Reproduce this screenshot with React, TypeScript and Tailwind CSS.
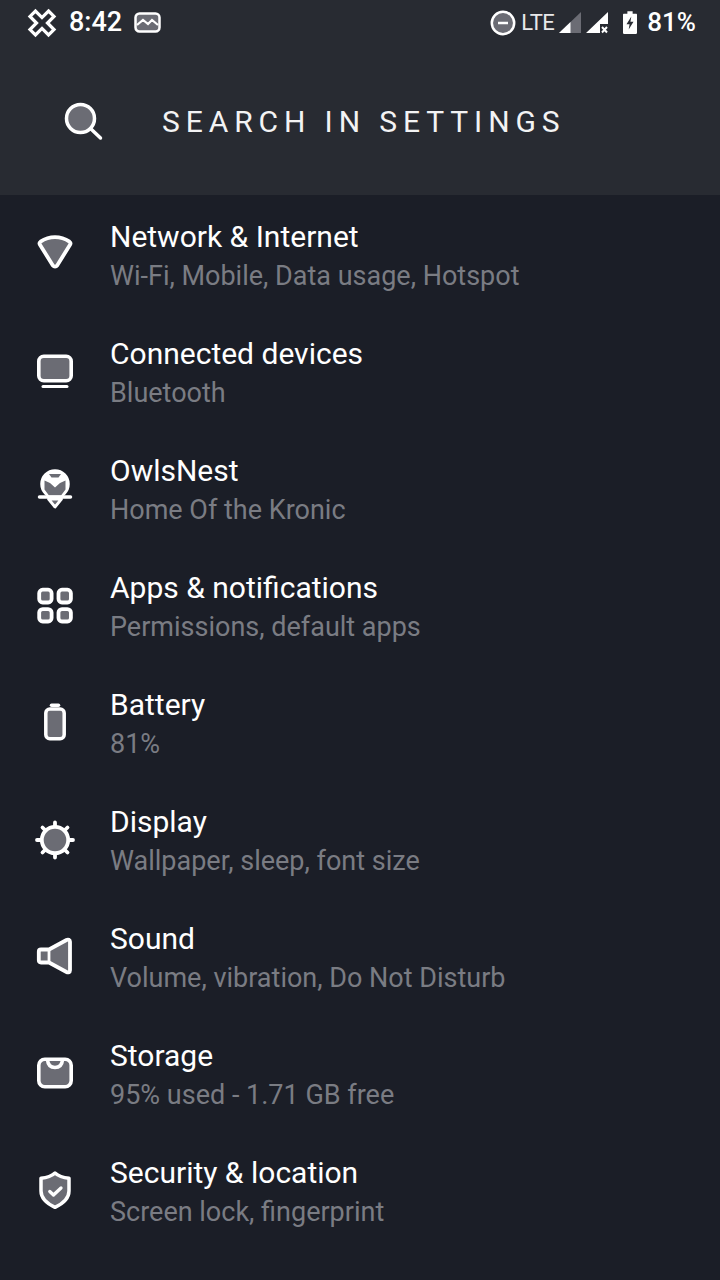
import React from 'react';

const fill = '#6b6c74';

const icons: Record<string, React.ReactNode> = {
  wifi: (
    <path d="M13.500 15.500c9-6 20-6 29 0 1 .7 1.200 1.800.7 2.800L30 39.500c-.9 1.300-3 1.300-4 0L12.800 18.300c-.5-1-.3-2.100.7-2.800z" transform="translate(0 -2.800)" fill={fill} stroke="#fff" strokeWidth="3.800" strokeLinejoin="round" />
  ),
  device: (
    <>
      <rect x="11.800" y="10.300" width="32.400" height="24.400" rx="5" fill={fill} stroke="#fff" strokeWidth="3.600" />
      <path d="M16 40.500h24" stroke="#fff" strokeWidth="3" strokeLinecap="round" />
    </>
  ),
  owl: (
    <>
      <circle cx="28" cy="21" r="13" fill="#fff" stroke="#fff" strokeWidth="3.500" />
      <path d="M22 11h12l-2.500 3.500h-7z" fill={fill} />
      <path d="M17.500 17.500l5.500 2.500 5 4.500 5-4.500 5.500-2.500v9l-4.500 6h-12l-4.500-6z" fill={fill} />
      <path d="M12.500 34h31" stroke="#fff" strokeWidth="3.500" strokeLinecap="round" />
      <path d="M21.500 36h13L28 44z" fill={fill} stroke="#fff" strokeWidth="2.800" strokeLinejoin="round" />
    </>
  ),
  apps: (
    <>
      <rect x="12.200" y="9.700" width="12.400" height="12.800" rx="3.500" fill={fill} stroke="#fff" strokeWidth="3.800" />
      <rect x="31.500" y="9.700" width="12.400" height="12.800" rx="3.500" fill={fill} stroke="#fff" strokeWidth="3.800" />
      <rect x="12.200" y="29.100" width="12.400" height="12.400" rx="3.500" fill={fill} stroke="#fff" strokeWidth="3.800" />
      <rect x="31.500" y="29.100" width="12.400" height="12.400" rx="3.500" fill={fill} stroke="#fff" strokeWidth="3.800" />
    </>
  ),
  battery: (
    <>
      <path d="M24.500 8.300h7" stroke="#fff" strokeWidth="3.500" strokeLinecap="round" />
      <rect x="18.800" y="12" width="18.400" height="29.800" rx="4" fill={fill} stroke="#fff" strokeWidth="3.500" />
    </>
  ),
  display: (
    <>
      <path d="M28 8.500v35M10 26h36M15.500 13.500l25 25M40.500 13.500l-25 25" stroke="#fff" strokeWidth="3.800" strokeLinecap="round" />
      <circle cx="28" cy="26" r="13.200" fill={fill} stroke="#fff" strokeWidth="3.800" />
    </>
  ),
  sound: (
    <>
      <path d="M14 18.500h8L39.500 9c1.700-.9 3.500-.2 3.500 1.800v28.400c0 2-1.800 2.700-3.500 1.800L22 31.500h-8c-1.500 0-2.200-.8-2.200-2.200v-8.600c0-1.400.7-2.200 2.200-2.200z" fill={fill} stroke="#fff" strokeWidth="3.800" strokeLinejoin="round" />
      <path d="M22 18.500v13" stroke="#fff" strokeWidth="2.800" />
    </>
  ),
  storage: (
    <>
      <rect x="11.800" y="11.300" width="32.400" height="27.400" rx="6" fill={fill} stroke="#fff" strokeWidth="3.600" />
      <path d="M20.500 12c.5 5 3.500 7.500 7.500 7.500s7-2.500 7.500-7.500" fill="none" stroke="#fff" strokeWidth="3.500" />
    </>
  ),
  security: (
    <>
      <path d="M28 8c3 2.800 8 4.700 14 5.200V26c0 7.500-6.500 12.800-14 16.300-7.500-3.500-14-8.800-14-16.300V13.200C20 12.700 25 10.800 28 8z" fill={fill} stroke="#fff" strokeWidth="3.500" strokeLinejoin="round" />
      <path d="M22.800 26.500l3.700 3.500 7.500-7" fill="none" stroke="#fff" strokeWidth="3.300" strokeLinecap="round" strokeLinejoin="round" />
    </>
  ),
};

const rows = [
  { icon: 'wifi', title: 'Network & Internet', sub: 'Wi-Fi, Mobile, Data usage, Hotspot' },
  { icon: 'device', title: 'Connected devices', sub: 'Bluetooth' },
  { icon: 'owl', title: 'OwlsNest', sub: 'Home Of the Kronic' },
  { icon: 'apps', title: 'Apps & notifications', sub: 'Permissions, default apps' },
  { icon: 'battery', title: 'Battery', sub: '81%' },
  { icon: 'display', title: 'Display', sub: 'Wallpaper, sleep, font size' },
  { icon: 'sound', title: 'Sound', sub: 'Volume, vibration, Do Not Disturb' },
  { icon: 'storage', title: 'Storage', sub: '95% used - 1.71 GB free' },
  { icon: 'security', title: 'Security & location', sub: 'Screen lock, fingerprint' },
  { icon: 'accounts', title: 'Accounts', sub: '' },
];

const StatusBar = () => (
  <div className="flex h-[45px] items-center justify-between pl-[27px] pr-[24px] text-white">
    <div className="flex items-center">
      <svg width="30" height="30" viewBox="0 0 30 30" className="mr-[12px]">
        <path d="M11 1.500h8v9.500h9.500v8H19v9.500h-8V19H1.500v-8H11z" transform="rotate(45 15 15) translate(.45 .45) scale(.97)" fill="none" stroke="#fff" strokeWidth="3.300" />
      </svg>
      <span className="text-[27px] font-medium">8:42</span>
      <svg width="28" height="22" viewBox="0 0 28 22" className="ml-[12px]">
        <rect x="1.500" y="1.500" width="24" height="18" rx="4" fill={fill} stroke="#fff" strokeWidth="2.500" />
        <path d="M3 13l6-5 5 4 4-4 6 5" fill="none" stroke="#fff" strokeWidth="2.200" />
      </svg>
    </div>
    <div className="flex items-center">
      <svg width="26" height="26" viewBox="0 0 26 26" className="mr-[5px]">
        <circle cx="13" cy="13" r="11.200" fill={fill} stroke="#fff" strokeWidth="2.500" />
        <path d="M8 13h10" stroke="#fff" strokeWidth="2.500" />
      </svg>
      <span className="text-[22px] text-[#e8e8ea] tracking-[-0.5px]">LTE</span>
      <svg width="24" height="24" viewBox="0 0 24 24" className="ml-[4px]">
        <path d="M1 22L23 1v21z" fill={fill} />
        <path d="M1 22L12.500 11V22z" fill="#fff" />
      </svg>
      <svg width="24" height="24" viewBox="0 0 24 24" className="ml-[3px]">
        <path d="M1 22L23 1v12h-8v9z" fill="#fff" />
        <path d="M17 16l5 5.500M22 16l-5 5.500" stroke="#fff" strokeWidth="2" />
      </svg>
      <svg width="14" height="25" viewBox="0 0 16 26" className="ml-[14px]">
        <path d="M5 0h6v3h4c.5 0 1 .5 1 1v21c0 .5-.5 1-1 1H1c-.5 0-1-.5-1-1V4c0-.5.5-1 1-1h4z" fill="#fff" />
        <path d="M9.500 6L4 15h3.500L6.500 21 12 12H8.500z" fill="#292c33" />
      </svg>
      <span className="ml-[10px] text-[26px] font-medium">81%</span>
    </div>
  </div>
);

export default function App() {
  return (
    <div className="h-[1280px] w-[720px] overflow-hidden bg-[#1b1e27] font-['Roboto',sans-serif]">
      <div className="h-[195px] bg-[#282b32]">
        <StatusBar />
        <div className="flex h-[153px] items-center pl-[64px]">
          <svg width="40" height="40" viewBox="0 0 40 40">
            <circle cx="16.500" cy="16.500" r="14" fill={fill} stroke="#fff" strokeWidth="3.500" />
            <path d="M26.500 26.500L36.500 36" stroke="#fff" strokeWidth="3.500" strokeLinecap="round" />
          </svg>
          <span className="ml-[58px] text-[30px] tracking-[5.9px] text-[#f3f3f4]">SEARCH IN SETTINGS</span>
        </div>
      </div>
      <div className="pt-[3px]">
        {rows.map((row) => (
          <div key={row.title} className="flex h-[117px] items-center">
            <div className="flex w-[110px] justify-center">
              <svg width="56" height="56" viewBox="0 0 56 56">
                {icons[row.icon]}
              </svg>
            </div>
            <div className="flex flex-col">
              <span className="mb-[2px] text-[30px] leading-[36px] text-white">{row.title}</span>
              <span className="text-[27px] leading-[38px] text-[#7a7c83]">{row.sub}</span>
            </div>
          </div>
        ))}
      </div>
    </div>
  );
}
